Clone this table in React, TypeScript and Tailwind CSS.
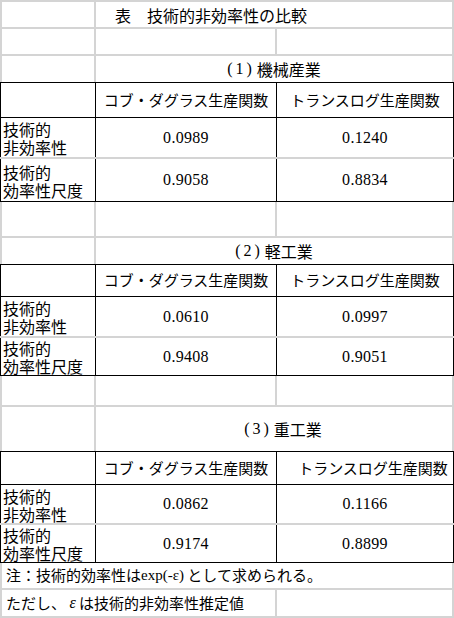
import React from "react";

const JP = "font-['Noto_Sans_CJK_JP',sans-serif]";
const SERIF = "font-['Liberation_Serif','Noto_Serif_CJK_JP',serif]";

function Row({
  h,
  bottom,
  children,
}: {
  h: string;
  bottom: "grey" | "black";
  children: React.ReactNode;
}) {
  const b =
    bottom === "grey"
      ? "border-b-2 border-b-[#d4d4d4]"
      : "border-b border-b-black";
  return <div className={`flex w-[454px] ${h} ${b}`}>{children}</div>;
}

function Num({ v }: { v: string }) {
  return <span className={`${SERIF} text-[16px] tracking-[0.3px]`}>{v}</span>;
}

function Label({ a, b }: { a: string; b: string }) {
  return (
    <div className={`${JP} text-[16px] leading-[18px] pl-[2px] pt-[1px]`}>
      <div>{a}</div>
      <div>{b}</div>
    </div>
  );
}

function SectionTitle({ n, name, shift }: { n: string; name: string; shift: string }) {
  return (
    <div
      className={`flex-1 flex items-center justify-center border-r-2 border-r-[#d4d4d4] ${shift}`}
    >
      <span className={`${SERIF} text-[16px] tracking-[3px] mr-[2px]`}>({n})</span>
      <span className={`${JP} text-[16px]`}>{name}</span>
    </div>
  );
}

function GreyEmpty3() {
  return (
    <>
      <div className="w-[96px] border-l-2 border-l-[#d4d4d4] border-r-2 border-r-[#d4d4d4]" />
      <div className="w-[181px] border-r-2 border-r-[#d4d4d4]" />
      <div className="w-[177px] border-r-2 border-r-[#d4d4d4]" />
    </>
  );
}

function TableBlock({
  h,
  rows,
  headerShift,
}: {
  h: [string, string, string];
  rows: [string, string][];
  headerShift: string;
}) {
  return (
    <>
      <Row h={h[0]} bottom="black">
        <div className="w-[96px] border-l border-l-black border-r border-r-black" />
        <div
          className={`w-[181px] border-r border-r-black flex items-center justify-center ${JP} text-[15px]`}
        >
          コブ・ダグラス生産関数
        </div>
        <div
          className={`w-[177px] border-r border-r-black flex items-center justify-center ${JP} text-[15px] ${headerShift}`}
        >
          トランスログ生産関数
        </div>
      </Row>
      <Row h={h[1]} bottom="grey">
        <div className="w-[96px] border-l border-l-black border-r border-r-black flex items-center">
          <Label a="技術的" b="非効率性" />
        </div>
        <div className="w-[181px] border-r border-r-black flex items-center justify-center">
          <Num v={rows[0][0]} />
        </div>
        <div className="w-[177px] border-r border-r-black flex items-center justify-center">
          <Num v={rows[0][1]} />
        </div>
      </Row>
      <Row h={h[2]} bottom="black">
        <div className="w-[96px] border-l border-l-black border-r border-r-black flex items-center">
          <Label a="技術的" b="効率性尺度" />
        </div>
        <div className="w-[181px] border-r border-r-black flex items-center justify-center">
          <Num v={rows[1][0]} />
        </div>
        <div className="w-[177px] border-r border-r-black flex items-center justify-center">
          <Num v={rows[1][1]} />
        </div>
      </Row>
    </>
  );
}

export default function App() {
  return (
    <div className="w-[454px] h-[618px] bg-white text-black overflow-hidden">
      <div className="w-[454px] border-t-2 border-t-[#d4d4d4]">
        <Row h="h-[27px]" bottom="grey">
          <div className="w-[96px] border-l-2 border-l-[#d4d4d4] border-r-2 border-r-[#d4d4d4]" />
          <div
            className={`flex-1 flex items-center pl-[19px] border-r-2 border-r-[#d4d4d4] ${JP} text-[16px]`}
          >
            表　技術的非効率性の比較
          </div>
        </Row>
        <Row h="h-[27px]" bottom="grey">
          <GreyEmpty3 />
        </Row>
        <Row h="h-[27px]" bottom="black">
          <div className="w-[96px] border-l-2 border-l-[#d4d4d4] border-r-2 border-r-[#d4d4d4]" />
          <SectionTitle n="1" name="機械産業" shift="" />
        </Row>
        <TableBlock
          h={["h-[35px]", "h-[41px]", "h-[43px]"]}
          rows={[
            ["0.0989", "0.1240"],
            ["0.9058", "0.8834"],
          ]}
          headerShift=""
        />
        <Row h="h-[36px]" bottom="grey">
          <GreyEmpty3 />
        </Row>
        <Row h="h-[27px]" bottom="black">
          <div className="w-[96px] border-l-2 border-l-[#d4d4d4] border-r-2 border-r-[#d4d4d4]" />
          <SectionTitle n="2" name="軽工業" shift="" />
        </Row>
        <TableBlock
          h={["h-[32px]", "h-[41px]", "h-[38px]"]}
          rows={[
            ["0.0610", "0.0997"],
            ["0.9408", "0.9051"],
          ]}
          headerShift=""
        />
        <Row h="h-[31px]" bottom="grey">
          <GreyEmpty3 />
        </Row>
        <Row h="h-[45px]" bottom="black">
          <div className="w-[96px] border-l-2 border-l-[#d4d4d4] border-r-2 border-r-[#d4d4d4]" />
          <SectionTitle n="3" name="重工業" shift="pl-[18px]" />
        </Row>
        <TableBlock
          h={["h-[33px]", "h-[40px]", "h-[38px]"]}
          rows={[
            ["0.0862", "0.1166"],
            ["0.9174", "0.8899"],
          ]}
          headerShift="pl-[16px]"
        />
        <Row h="h-[27px]" bottom="grey">
          <div
            className={`flex-1 flex items-center pl-[4px] border-l-2 border-l-[#d4d4d4] border-r-2 border-r-[#d4d4d4] text-[15px] whitespace-nowrap`}
          >
            <span className={JP}>注：技術的効率性は</span>
            <span className={`${SERIF} text-[15px]`}>exp(-ε)</span>
            <span className={JP}>&nbsp;として求められる。</span>
          </div>
        </Row>
        <Row h="h-[28px]" bottom="grey">
          <div
            className={`w-[277px] flex items-center pl-[4px] border-l-2 border-l-[#d4d4d4] border-r-2 border-r-[#d4d4d4] text-[15px] whitespace-nowrap`}
          >
            <span className={JP}>ただし、&nbsp;</span>
            <span className={`${SERIF} italic text-[16px]`}>ε</span>
            <span className={JP}>&nbsp;は技術的非効率性推定値</span>
          </div>
          <div className="w-[177px] border-r-2 border-r-[#d4d4d4]" />
        </Row>
      </div>
    </div>
  );
}
